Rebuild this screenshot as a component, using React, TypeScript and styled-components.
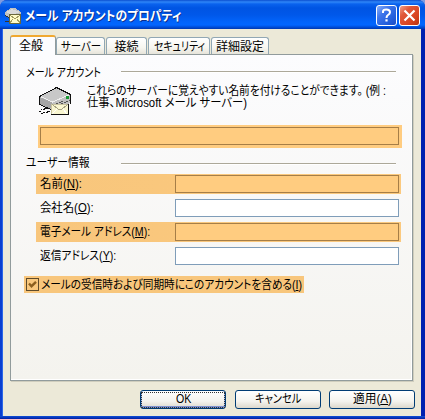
import React, { useLayoutEffect, useRef } from "react";
import styled, { createGlobalStyle, css } from "styled-components";

const GlobalStyle = createGlobalStyle`
  * { box-sizing: border-box; }
  html, body { margin: 0; padding: 0; background: #7f9be0; overflow: hidden; }
  body { font-family: "Liberation Sans", "Noto Sans CJK JP", sans-serif; font-size: 12px; color: #000; }
`;

const Window = styled.div`
  width: 425px;
  height: 419px;
  display: flex;
  flex-direction: column;
  border-radius: 7px 7px 0 0;
  overflow: hidden;
  background: linear-gradient(to right, #0a3fd0 50%, #0020b0 50%);
`;

const TitleBar = styled.header`
  height: 29px;
  flex: none;
  display: flex;
  align-items: center;
  padding: 2px 5px 0 5px;
  background: linear-gradient(
    to bottom,
    #0b4fd0 0,
    #2f86f8 2px,
    #0a62ee 4px,
    #0054e3 8px,
    #0058ea 15px,
    #0264fb 22px,
    #0266ff 25px,
    #004fdb 27px,
    #0038b0 29px
  );
`;

const TitleText = styled.h1`
  margin: 0 auto 0 2px;
  font-size: 13px;
  font-weight: bold;
  color: #fff;
  text-shadow: 1px 1px 0 #0a2f8c;
  line-height: 20px;
  height: 20px;
`;

const CaptionButton = styled.button<{ $danger?: boolean }>`
  width: 21px;
  height: 21px;
  padding: 0;
  margin: 0 0 0 2px;
  display: flex;
  align-items: center;
  justify-content: center;
  border: 1px solid #fff;
  border-radius: 3px;
  background: ${(p) =>
    p.$danger
      ? "linear-gradient(135deg, #f0a08a 0%, #e0583a 30%, #d8431f 70%, #b93510 100%)"
      : "linear-gradient(135deg, #8ab0fa 0%, #3d74ea 35%, #2560dd 70%, #1c4cc4 100%)"};
`;

const Client = styled.main`
  flex: none;
  height: 387px;
  margin: 0 4px 0 3px;
  padding: 6px 0 0 7px;
  background: #ece9d8;
  box-shadow: -1px 0 0 #2a66e8;
`;

const WindowBase = styled.div`
  height: 3px;
  background: linear-gradient(to bottom, #0f4fd8, #001ea0);
`;

const TabStrip = styled.nav`
  height: 19px;
  display: flex;
  align-items: flex-end;
`;

const Tab = styled.div<{ $width: number; $gap?: number; $active?: boolean }>`
  width: ${(p) => p.$width}px;
  margin-left: ${(p) => p.$gap ?? 0}px;
  height: 17px;
  display: flex;
  justify-content: center;
  border: 1px solid #91a7b4;
  border-bottom: 0;
  border-radius: 3px 3px 0 0;
  background: linear-gradient(#fff, #f7f6f0 60%, #e6e4da);
  line-height: 19px;
  ${(p) =>
    p.$active &&
    css`
      height: 20px;
      margin-bottom: -1px;
      padding-right: 4px;
      position: relative;
      z-index: 1;
      border-color: #919b9c;
      border-top: 2px solid #f0a830;
      background: #fcfcfe;
      line-height: 18px;
    `}
`;

const Panel = styled.section`
  width: 403px;
  height: 327px;
  padding: 9px 8px 0 13px;
  border: 1px solid #919b9c;
  box-shadow: 1px 1px 0 #cfcdbd, inset -1px -1px 0 #fff;
  background: linear-gradient(#fcfcfe, #f4f3ee);
`;

const Heading = styled.div`
  display: flex;
  height: 18px;
  line-height: 18px;
  padding-left: 2px;
`;

const HeadingText = styled.div`
  width: 95px;
`;

const Rule = styled.div<{ $top: number }>`
  width: 275px;
  height: 1px;
  margin-top: ${(p) => p.$top}px;
  background: #aca899;
  box-shadow: 0 1px 0 #fff;
`;

const Intro = styled.div`
  display: flex;
  height: 43px;
  padding-left: 15px;
`;

const IntroLines = styled.div`
  margin: 3px 0 0 14px;
  line-height: 12px;
`;

const Highlight = styled.div`
  width: 364px;
  height: 23px;
  margin-left: 14px;
  padding: 2px 2px 0;
  background: #ffcc80;
`;

const Field = styled.div<{ $width: number; $marked?: boolean }>`
  width: ${(p) => p.$width}px;
  height: 18px;
  border: 1px solid ${(p) => (p.$marked ? "#a67e47" : "#7f9db9")};
  background: ${(p) => (p.$marked ? "#ffcc80" : "#fff")};
`;

const UserHeading = styled(Heading)`
  margin-top: 6px;
`;

const Rows = styled.div`
  margin: 2px 0 0 12px;
  display: grid;
  gap: 4px;
`;

const Row = styled.div<{ $marked?: boolean }>`
  width: 365px;
  height: 20px;
  display: flex;
  align-items: flex-start;
  padding: 1px 0 0 4px;
  background: ${(p) => (p.$marked ? "linear-gradient(to right, #f8c67c, #fbc97e)" : "transparent")};
`;

const Label = styled.label`
  width: 135px;
  line-height: 18px;
`;

const CheckRow = styled.label`
  width: 280px;
  height: 17px;
  margin-top: 10px;
  padding: 2px 0 0 2px;
  display: flex;
  line-height: 14px;
  background: #f8c67c;
`;

const CheckMark = styled.span`
  width: 13px;
  height: 13px;
  margin-right: 2px;
  display: flex;
  border: 1px solid #5f4b2a;
  background: #f9c87d;
`;

const Actions = styled.footer`
  margin: 9px 0 0 130px;
  display: flex;
  gap: 8.5px;
`;

const PushButton = styled.button<{ $primary?: boolean }>`
  width: 86px;
  height: 19px;
  padding: 0;
  display: flex;
  justify-content: center;
  font: inherit;
  line-height: 17px;
  color: #000;
  border: 1px solid #003c74;
  border-radius: 3px;
  background: linear-gradient(#fff, #f4f3ee 60%, #dcd8cc);
  outline: 0;
  ${(p) =>
    p.$primary &&
    css`
      box-shadow: inset 0 -2px 0 #7c90cf, inset 1px 0 0 #a9bff0, inset -1px 0 0 #a9bff0;
      &::before {
        content: "";
        position: absolute;
        width: 82px;
        height: 14px;
        margin-top: 1px;
        border: 1px dotted #333;
      }
    `}
`;

const Measured = styled.span`
  display: inline-block;
  white-space: pre;
  transform-origin: 0 50%;
  font-feature-settings: "palt";
  vertical-align: top;
`;

const Slot = styled.span<{ $width: number }>`
  display: block;
  width: ${(p) => p.$width}px;
  white-space: pre;
`;

const Key = styled.span`
  text-decoration: underline;
  text-underline-offset: 1px;
  text-decoration-thickness: 1px;
`;

/* Condenses a run of proportional kana to the width the dialog gives it. */
function Text({ width, children }: { width: number; children: React.ReactNode }) {
  const ref = useRef<HTMLSpanElement>(null);
  useLayoutEffect(() => {
    const el = ref.current;
    if (el && el.offsetWidth) el.style.transform = `scaleX(${width / el.offsetWidth})`;
  }, [width]);
  return (
    <Slot $width={width}>
      <Measured ref={ref}>{children}</Measured>
    </Slot>
  );
}

const SmallMailIcon = () => (
  <svg width="18" height="18" viewBox="0 0 18 18" shapeRendering="crispEdges">
    <path d="M0 5 L6 1 H10 L16 5 V9 L6 11 L0 8Z" fill="#c2c2c2" />
    <path d="M1 5 L7 2 L15 5 L7 8Z" fill="#dadada" />
    <path d="M0 8.5 L5 11 M0 14h4" stroke="#333" fill="none" />
    <rect x="4.5" y="7.5" width="11" height="9" fill="#fffbc8" stroke="#6b683c" />
    <path d="M5 8l5 4L15 8M5 16l3-4M15 16l-3-4" stroke="#a09a60" fill="none" />
  </svg>
);

const ServerMailIcon = () => (
  <svg width="33" height="29" viewBox="0 0 33 29" shapeRendering="crispEdges">
    <path d="M0.5 9.5 L17.5 0.5 L31.5 7.5 V16 L12.5 22.5 L0.5 17.5Z" fill="#bdbdbd" stroke="none" />
    <path d="M1 9.5 L17.5 1 L31 7.5 L14 15.5Z" fill="#c8c8c8" />
    <path d="M1 10 L13 15.5 V22 L1 17Z" fill="#a6a6a6" />
    <path d="M13 15.5 V22 L31 15 V8Z" fill="#c0c0c0" />
    <path d="M1.5 9.5 L13.5 15 L31 7.5" fill="none" stroke="#eee" />
    <path d="M0.5 9.5 L17.5 0.5 L31.5 7.5 V17 M0.5 9.5 V17.5 L12 22.5" fill="none" stroke="#111" />
    <path d="M17 17 L25 13.5 M22 17 L31 13" stroke="#555" strokeDasharray="2 1" />
    <rect x="27" y="9" width="3" height="3" fill="#169a32" />
    <path d="M0 24h2v-2h3v-1h3M2 26h2v-1h4v-1h4" fill="none" stroke="#111" strokeDasharray="2 1" />
    <rect x="12.5" y="17.5" width="17" height="10" fill="#f9f6d0" stroke="#c9c4a0" />
    <path d="M12 27.5 H29.5 V17" fill="none" stroke="#111" />
    <path d="M13 17.5 L20 22.5 h2 L29 17.5" fill="none" stroke="#a5a184" />
    <path d="M13 27 L18 22 M28 27 L24 22" fill="none" stroke="#fff" />
  </svg>
);

const fields = [
  { text: "名前", hotkey: "N", width: 42, marked: true },
  { text: "会社名", hotkey: "O", width: 54, marked: false },
  { text: "電子メール アドレス", hotkey: "M", width: 110, marked: true },
  { text: "返信アドレス", hotkey: "Y", width: 76, marked: false },
];

export default function App() {
  return (
    <>
      <GlobalStyle />
      <Window>
        <TitleBar>
          <SmallMailIcon />
          <TitleText>
            <Text width={156}>メール アカウントのプロパティ</Text>
          </TitleText>
          <CaptionButton aria-label="Help">
            <svg width="19" height="19" viewBox="0 0 19 19">
              <path d="M6 7V5.8Q6 3.5 9.4 3.5Q13 3.5 13 6.2Q13 7.8 11 9Q9.5 10 9.5 12" fill="none" stroke="#fff" strokeWidth="2" />
              <rect x="8.4" y="13.3" width="2.2" height="2.2" fill="#fff" />
            </svg>
          </CaptionButton>
          <CaptionButton $danger aria-label="Close">
            <svg width="19" height="19" viewBox="0 0 19 19">
              <path d="M4.5 4.5L14.5 14.5M14.5 4.5L4.5 14.5" stroke="#fff" strokeWidth="2.2" />
            </svg>
          </CaptionButton>
        </TitleBar>
        <Client>
          <TabStrip>
            <Tab $width={46} $active><Text width={24}>全般</Text></Tab>
            <Tab $width={49}><Text width={40}>サーバー</Text></Tab>
            <Tab $width={41} $gap={1}><Text width={24}>接続</Text></Tab>
            <Tab $width={62} $gap={1}><Text width={51}>セキュリティ</Text></Tab>
            <Tab $width={58} $gap={1}><Text width={48}>詳細設定</Text></Tab>
          </TabStrip>
          <Panel>
            <Heading>
              <HeadingText><Text width={75}>メール アカウント</Text></HeadingText>
              <Rule $top={7} />
            </Heading>
            <Intro>
              <svg width="34" height="34" viewBox="0 -5 34 34"><ServerMailIcon /></svg>
              <IntroLines>
                <Text width={299}>これらのサーバーに覚えやすい名前を付けることができます。 (例 :</Text>
                <Text width={160}>仕事、Microsoft メール サーバー)</Text>
              </IntroLines>
            </Intro>
            <Highlight><Field $width={359} $marked /></Highlight>
            <UserHeading>
              <HeadingText><Text width={64}>ユーザー情報</Text></HeadingText>
              <Rule $top={9} />
            </UserHeading>
            <Rows>
              {fields.map((f) => (
                <Row key={f.hotkey} $marked={f.marked}>
                  <Label>
                    <Text width={f.width}>{f.text}(<Key>{f.hotkey}</Key>):</Text>
                  </Label>
                  <Field $width={224} $marked={f.marked} />
                </Row>
              ))}
            </Rows>
            <CheckRow>
              <CheckMark>
                <svg width="11" height="11" viewBox="0 0 11 11">
                  <path d="M2 4.5L4.5 7.2L9 2.8" fill="none" stroke="#8c5f1e" strokeWidth="2.4" />
                </svg>
              </CheckMark>
              <Text width={261}>メールの受信時および同期時にこのアカウントを含める(<Key>I</Key>)</Text>
            </CheckRow>
          </Panel>
          <Actions>
            <PushButton $primary><Text width={15}>OK</Text></PushButton>
            <PushButton><Text width={46}>キャンセル</Text></PushButton>
            <PushButton><Text width={39}>適用(<Key>A</Key>)</Text></PushButton>
          </Actions>
        </Client>
        <WindowBase />
      </Window>
    </>
  );
}
